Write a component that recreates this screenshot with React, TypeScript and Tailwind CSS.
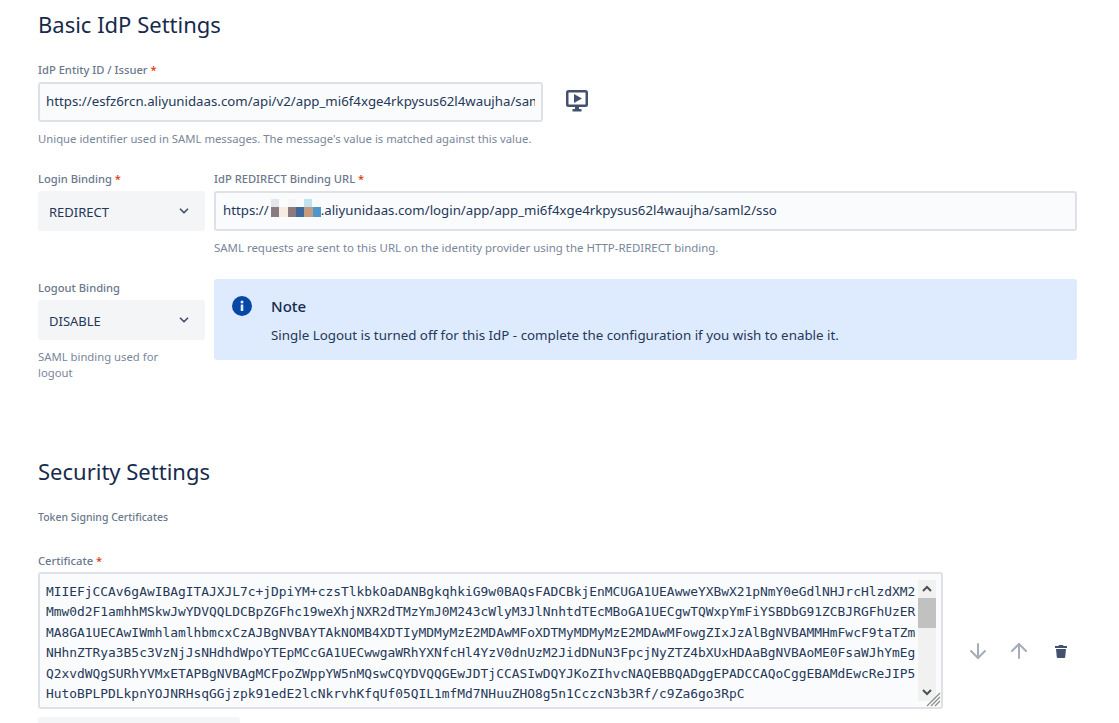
import React from 'react';
import { ChevronDown, ArrowDown, ArrowUp } from 'lucide-react';

const certLines = [
    'MIIEFjCCAv6gAwIBAgITAJXJL7c+jDpiYM+czsTlkbkOaDANBgkqhkiG9w0BAQsFADCBkjEnMCUGA1UEAwweYXBwX21pNmY0eGdlNHJrcHlzdXM2',
    'Mmw0d2F1amhhMSkwJwYDVQQLDCBpZGFhc19weXhjNXR2dTMzYmJ0M243cWlyM3JlNnhtdTEcMBoGA1UECgwTQWxpYmFiYSBDbG91ZCBJRGFhUzER',
    'MA8GA1UECAwIWmhlamlhbmcxCzAJBgNVBAYTAkNOMB4XDTIyMDMyMzE2MDAwMFoXDTMyMDMyMzE2MDAwMFowgZIxJzAlBgNVBAMMHmFwcF9taTZm',
    'NHhnZTRya3B5c3VzNjJsNHdhdWpoYTEpMCcGA1UECwwgaWRhYXNfcHl4YzV0dnUzM2JidDNuN3FpcjNyZTZ4bXUxHDAaBgNVBAoME0FsaWJhYmEg',
    'Q2xvdWQgSURhYVMxETAPBgNVBAgMCFpoZWppYW5nMQswCQYDVQQGEwJDTjCCASIwDQYJKoZIhvcNAQEBBQADggEPADCCAQoCggEBAMdEwcReJIP5',
    'HutoBPLPDLkpnYOJNRHsqGGjzpk91edE2lcNkrvhKfqUf05QIL1mfMd7NHuuZHO8g5n1CczcN3b3Rf/c9Za6go3RpC',
];

const Label = ({ text, required }: { text: string; required?: boolean }) => (
    <div className="text-[11.2px] leading-4 font-medium text-[#6b778c]">
        {text}
        {required && <span className="text-[#de350b]"> *</span>}
    </div>
);

const Help = ({ children }: { children: React.ReactNode }) => (
    <p className="text-[11.3px] leading-4 text-[#7a869a]">{children}</p>
);

const Select = ({ value }: { value: string }) => (
    <div className="flex h-10 items-center justify-between rounded-[3px] bg-[#f4f5f7] pl-[11px] pr-[14px] text-[13px] text-[#253858]">
        <span className="pt-[3px]">{value}</span>
        <ChevronDown size={14} strokeWidth={3} className="text-[#42526e]" />
    </div>
);

const Mosaic = () => (
    <svg width="52" height="18" viewBox="0 0 52 18" className="-mt-[6px] shrink-0">
        <rect x="2" y="0" width="8" height="8" fill="#e4e6ec" />
        <rect x="19" y="0" width="8" height="8" fill="#f7f7f7" />
        <rect x="35" y="0" width="8" height="8" fill="#bfe3f0" />
        <rect x="2" y="8" width="8" height="10" fill="#8a7a82" />
        <rect x="10" y="8" width="9" height="10" fill="#f5ebe3" />
        <rect x="19" y="8" width="8" height="10" fill="#8c7b7d" />
        <rect x="27" y="8" width="8" height="10" fill="#3f6a9e" />
        <rect x="35" y="8" width="9" height="10" fill="#c49c80" />
        <rect x="44" y="8" width="8" height="10" fill="#4d97cc" />
    </svg>
);

const App = () => {
    return (
        <div className="h-[723px] overflow-hidden bg-white pl-[38px] pr-[42px] text-[#172b4d] [font-family:'Noto_Sans',sans-serif]">
            {/* Basic IdP Settings */}
            <h2 className="pt-[8px] text-[22px] leading-8">Basic IdP Settings</h2>

            <div className="mt-[22px]">
                <Label text="IdP Entity ID / Issuer" required />
                <div className="mt-[4px] flex items-center">
                    <div className="flex h-10 w-[505px] items-center rounded-[3px] border-2 border-[#dfe1e6] bg-[#fafbfc] px-[6px] text-[13.250px] text-[#253858]">
                        <div className="min-w-0 flex-1 overflow-hidden whitespace-nowrap">
                            https://esfz6rcn.aliyunidaas.com/api/v2/app_mi6f4xge4rkpysus62l4waujha/saml2/meta
                        </div>
                    </div>
                    <svg width="24" height="24" viewBox="0 0 24 24" className="ml-[22px] -mt-[2px] text-[#42526e]">
                        <path fill="currentColor" fillRule="evenodd" d="M3.500 1h17A2.500 2.500 0 0 1 23 3.500v12a2.500 2.500 0 0 1-2.500 2.500H14v2h2.500v2.500h-9V20H10v-2H3.500A2.500 2.500 0 0 1 1 15.500v-12A2.500 2.500 0 0 1 3.500 1zM3.500 3.500v12h17v-12h-17zM9 5l8 4.500L9 14V5z" />
                    </svg>
                </div>
                <div className="mt-[9px]">
                    <Help>Unique identifier used in SAML messages. The message's value is matched against this value.</Help>
                </div>
            </div>

            <div className="mt-[24px] flex gap-[9px]">
                <div className="w-[167px]">
                    <Label text="Login Binding" required />
                    <div className="mt-[4px]">
                        <Select value="REDIRECT" />
                    </div>
                </div>
                <div className="flex-1">
                    <Label text="IdP REDIRECT Binding URL" required />
                    <div className="mt-[4px] flex h-10 items-center rounded-[3px] border-2 border-[#dfe1e6] bg-[#fafbfc] px-[7px] text-[13.250px] whitespace-nowrap text-[#253858]">
                        https://
                        <Mosaic />
                        .aliyunidaas.com/login/app/app_mi6f4xge4rkpysus62l4waujha/saml2/sso
                    </div>
                    <p className="mt-[9px] text-[11.450px] leading-4 text-[#7a869a]">
                        SAML requests are sent to this URL on the identity provider using the HTTP-REDIRECT binding.
                    </p>
                </div>
            </div>

            <div className="mt-[23px] flex gap-[9px]">
                <div className="w-[167px] pt-[1px]">
                    <Label text="Logout Binding" />
                    <div className="mt-[4px]">
                        <Select value="DISABLE" />
                    </div>
                    <div className="mt-[9px] pr-[30px]">
                        <Help>SAML binding used for logout</Help>
                    </div>
                </div>
                <div className="flex h-[81px] flex-1 gap-[19px] rounded-[3px] bg-[#deebff] pl-[18px] pt-[17px]">
                    <svg width="20" height="20" viewBox="0 0 20 20" className="shrink-0">
                        <circle cx="10" cy="10" r="10" fill="#0747a6" />
                        <rect x="8.700" y="8.500" width="2.600" height="6.500" rx="0.500" fill="#deebff" />
                        <circle cx="10" cy="6" r="1.500" fill="#deebff" />
                    </svg>
                    <div>
                        <div className="text-[15px] leading-5 font-medium text-[#172b4d]">Note</div>
                        <p className="mt-[9px] text-[13.350px] leading-5 text-[#253858]">
                            Single Logout is turned off for this IdP - complete the configuration if you wish to enable it.
                        </p>
                    </div>
                </div>
            </div>

            {/* Security Settings */}
            <h2 className="mt-[74px] text-[22px] leading-8">Security Settings</h2>

            <div className="mt-[22px] text-[10.500px] leading-4 font-medium text-[#6b778c]">Token Signing Certificates</div>

            <div className="mt-[28px]">
                <Label text="Certificate" required />
                <div className="mt-[3px] flex items-center">
                    <div className="relative flex h-[137px] w-[905px] overflow-hidden rounded-[3px] border-2 border-[#dfe1e6] bg-[#fafbfc] pl-[6px] pt-[8px]">
                        <div className="flex-1 overflow-hidden text-[12.900px] leading-[20.400px] whitespace-pre text-[#253858] [font-family:'DejaVu_Sans_Mono',monospace]">
                            {certLines.map(line => (
                                <div key={line.slice(0, 12)}>{line}</div>
                            ))}
                        </div>
                        {/* textarea scrollbar and resize grip */}
                        <div className="absolute right-[5px] top-[6px] flex h-[121px] w-[18px] flex-col items-center bg-[#f1f1f1]">
                            <svg width="12" height="18" viewBox="0 0 12 18" className="shrink-0 text-[#505050]">
                                <path d="M2 11l4-4 4 4" fill="none" stroke="currentColor" strokeWidth="2" />
                            </svg>
                            <div className="h-[30px] w-full bg-[#c1c1c1]" />
                            <svg width="12" height="18" viewBox="0 0 12 18" className="mt-auto shrink-0 text-[#505050]">
                                <path d="M2 7l4 4 4-4" fill="none" stroke="currentColor" strokeWidth="2" />
                            </svg>
                        </div>
                        <svg width="16" height="16" viewBox="0 0 16 16" className="absolute bottom-0 right-0 text-[#8a8a8a]">
                            <path d="M2 15L15 2M6 15l9-9M10 15l5-5" stroke="currentColor" strokeWidth="1.200" fill="none" />
                        </svg>
                    </div>
                    <div className="mt-[20px] flex items-center">
                        <ArrowDown size={24} strokeWidth={2} className="ml-[23px] text-[#a5adba]" />
                        <ArrowUp size={24} strokeWidth={2} className="ml-[17px] text-[#a5adba]" />
                        <svg width="14" height="14" viewBox="0 0 14 14" className="ml-[23px] text-[#42526e]">
                            <path fill="currentColor" d="M5 1h4l.5 1H13v2H1V2h3.500L5 1zM2 5h10l-.8 8.200a.9.9 0 0 1-.9.800H3.700a.9.9 0 0 1-.9-.8L2 5z" />
                        </svg>
                    </div>
                </div>
                <div className="mt-[8px] h-8 w-[202px] rounded-[3px] bg-[#f4f5f7]" />
            </div>
        </div>
    );
};

export default App;
